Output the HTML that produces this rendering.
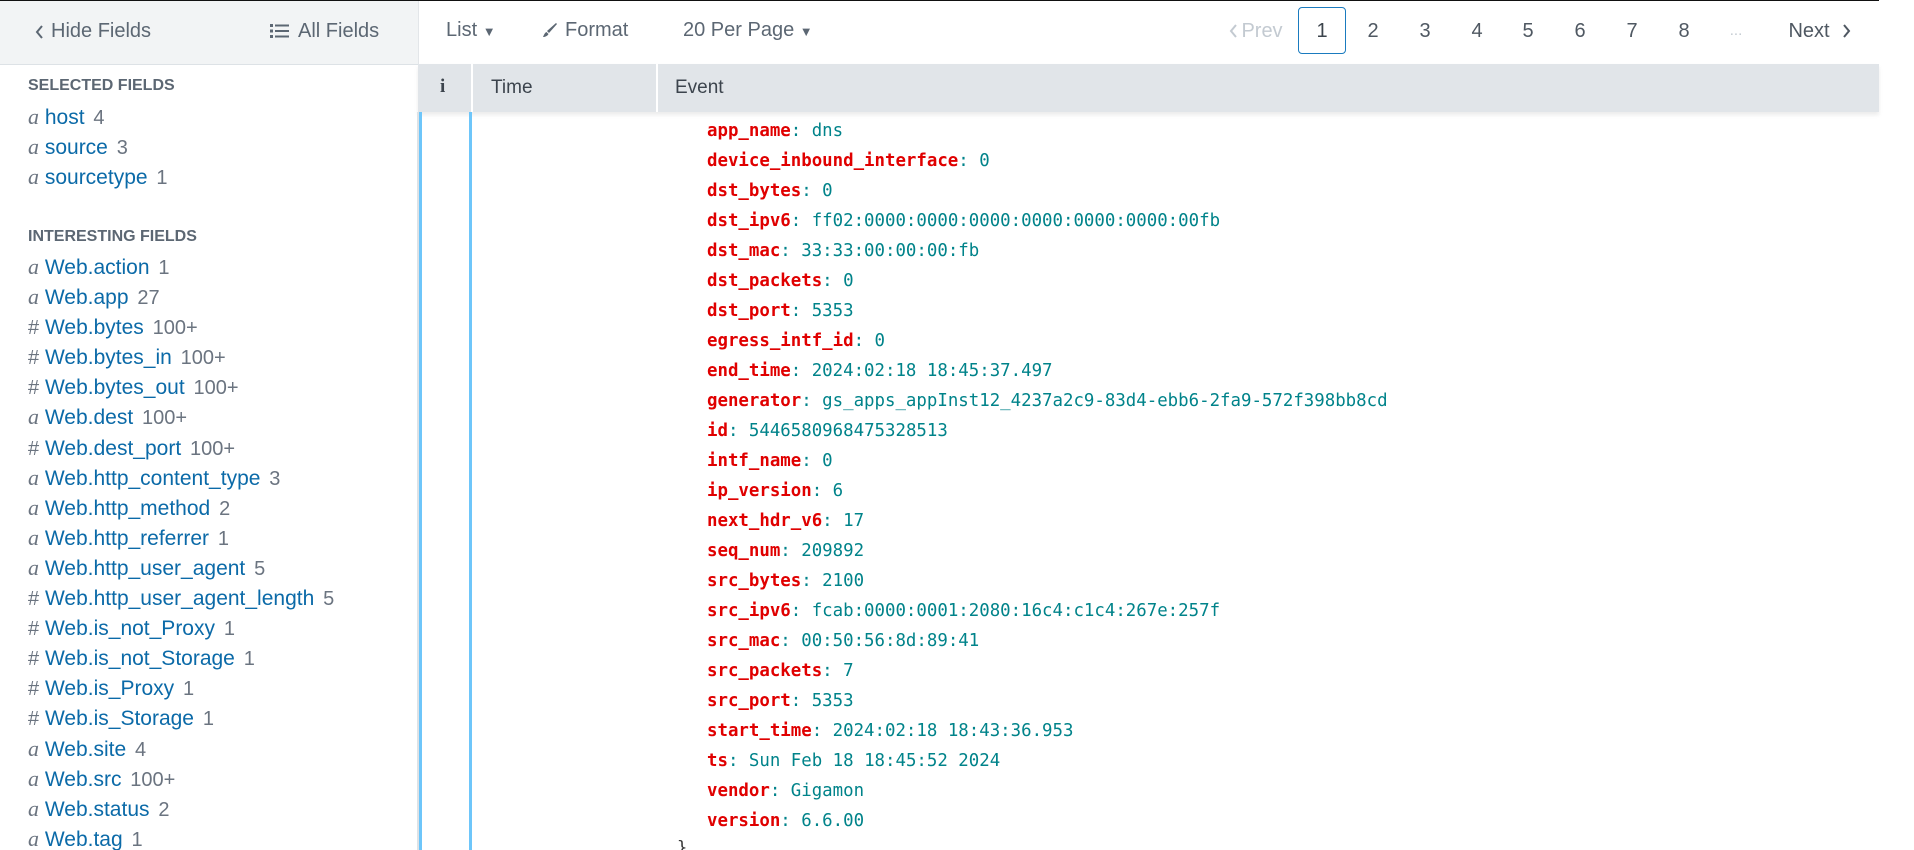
<!DOCTYPE html>
<html><head><meta charset="utf-8"><style>
*{margin:0;padding:0;box-sizing:border-box}
html,body{width:1914px;height:850px;overflow:hidden;background:#fff}
#w{position:relative;width:1914px;height:850px;overflow:hidden;font-family:"Liberation Sans",sans-serif}
.topline{position:absolute;left:0;top:0;width:1879px;height:1px;background:#111}
.ltb{position:absolute;left:0;top:1px;width:418px;height:64px;background:#f2f4f5;border-bottom:1px solid #dde2e6;color:#5c6773;font-size:20px}
.vb{position:absolute;width:3px;background:#6ec6fa}
.abs{position:absolute;white-space:nowrap}
.tb{color:#5c6773;font-size:20px}
.h{font-weight:bold;color:#5c6773;font-size:16px}
.f{font-size:21px;color:#0b6aa8}
.f div{height:30.1px;line-height:30.1px;overflow:visible;white-space:nowrap}
.f i{font-family:"Liberation Serif",serif;color:#6b7480;font-size:22px;font-style:italic;line-height:1}
.f b{font-weight:normal;color:#6b7480;font-size:20px;line-height:1;margin-left:3px}
.f .hs{color:#6b7480;font-size:20px;line-height:1}
.thead{position:absolute;left:418px;top:64px;width:1461px;height:48px;background:#e1e5e9;box-shadow:0 3px 4px rgba(0,0,0,.08);color:#3c444d;font-size:19px}
.sep{position:absolute;top:0;width:2px;height:48px;background:#fff}
.ev{position:absolute;left:707px;font-family:"DejaVu Sans Mono","Liberation Mono",monospace;font-size:17.4px;color:#00838a;white-space:nowrap}
.ev div{height:30px;line-height:30px}
.ev b{color:#e00000;line-height:1}
.pg{position:absolute;top:0;font-size:20px;color:#4f5862;line-height:62px;transform:translateX(-50%)}
</style></head><body><div id="w">
<div class="topline"></div>
<div class="ltb">
 <svg class="abs" style="left:35px;top:24px" width="9" height="14" viewBox="0 0 9 14"><path d="M7 1 L2 7 L7 13" fill="none" stroke="#5c6773" stroke-width="2"/></svg>
 <div class="abs" style="left:51px;top:19px">Hide Fields</div>
 <svg class="abs" style="left:270px;top:22px" width="20" height="16" viewBox="0 0 20 16"><g fill="#5c6773"><rect x="0" y="1" width="3" height="3"/><rect x="0" y="6.5" width="3" height="3"/><rect x="0" y="12" width="3" height="3"/><rect x="5" y="1.5" width="14" height="2"/><rect x="5" y="7" width="14" height="2"/><rect x="5" y="12.5" width="14" height="2"/></g></svg>
 <div class="abs" style="left:298px;top:19px">All Fields</div>
</div>
<div style="position:absolute;left:418px;top:1px;width:1px;height:64px;background:#e3e6e9"></div>
<div class="abs tb" style="left:446px;top:19px">List <span style="font-size:13px">&#9660;</span></div>
<svg class="abs" style="left:542px;top:22px" width="16" height="16" viewBox="0 0 16 16"><path d="M14 1 L15 2 L7 11 L5 9 Z" fill="#5c6773"/><path d="M4.5 10 L6.5 12 C5.5 14 3 15 1 15 C2 13 2.5 11 4.5 10Z" fill="#5c6773"/></svg>
<div class="abs tb" style="left:565px;top:19px">Format</div>
<div class="abs tb" style="left:683px;top:19px">20 Per Page <span style="font-size:13px">&#9660;</span></div>
<svg class="abs" style="left:1229px;top:24px" width="9" height="14" viewBox="0 0 9 14"><path d="M7 1 L2 7 L7 13" fill="none" stroke="#c3cad1" stroke-width="2"/></svg>
<div class="pg" style="left:1262px;color:#c3cad1">Prev</div>
<div style="position:absolute;left:1298px;top:7px;width:48px;height:47px;border:1px solid #1a7bbf;border-radius:4px"></div>
<div class="pg" style="left:1322px;color:#3c444d">1</div>
<div class="pg" style="left:1373px">2</div>
<div class="pg" style="left:1425px">3</div>
<div class="pg" style="left:1477px">4</div>
<div class="pg" style="left:1528px">5</div>
<div class="pg" style="left:1580px">6</div>
<div class="pg" style="left:1632px">7</div>
<div class="pg" style="left:1684px">8</div>
<div class="pg" style="left:1736px;color:#c3cad1;font-size:15px">...</div>
<div class="pg" style="left:1809px">Next</div>
<svg class="abs" style="left:1842px;top:24px" width="9" height="14" viewBox="0 0 9 14"><path d="M2 1 L7 7 L2 13" fill="none" stroke="#4f5862" stroke-width="2"/></svg>

<div class="thead">
 <div class="abs" style="left:22px;top:12px;font-family:'Liberation Serif',serif;font-weight:bold;font-size:19px">i</div>
 <div class="sep" style="left:53px"></div>
 <div class="abs" style="left:73px;top:13px">Time</div>
 <div class="sep" style="left:238px"></div>
 <div class="abs" style="left:257px;top:13px">Event</div>
</div>
<div style="position:absolute;left:417px;top:112px;width:2px;height:738px;background:#dde2e6"></div>
<div class="vb" style="left:419px;top:112px;height:738px"></div>
<div class="vb" style="left:469px;top:112px;height:738px"></div>

<div class="abs h" style="left:28px;top:77px">SELECTED FIELDS</div>
<div class="abs f" style="left:28px;top:103px">
<div><i>a</i> host <b>4</b></div>
<div><i>a</i> source <b>3</b></div>
<div><i>a</i> sourcetype <b>1</b></div>
</div>
<div class="abs h" style="left:28px;top:228px">INTERESTING FIELDS</div>
<div style="position:absolute;left:28px;top:253px" class="f">
<div><i>a</i> Web.action <b>1</b></div>
<div><i>a</i> Web.app <b>27</b></div>
<div><span class="hs">#</span> Web.bytes <b>100+</b></div>
<div><span class="hs">#</span> Web.bytes_in <b>100+</b></div>
<div><span class="hs">#</span> Web.bytes_out <b>100+</b></div>
<div><i>a</i> Web.dest <b>100+</b></div>
<div><span class="hs">#</span> Web.dest_port <b>100+</b></div>
<div><i>a</i> Web.http_content_type <b>3</b></div>
<div><i>a</i> Web.http_method <b>2</b></div>
<div><i>a</i> Web.http_referrer <b>1</b></div>
<div><i>a</i> Web.http_user_agent <b>5</b></div>
<div><span class="hs">#</span> Web.http_user_agent_length <b>5</b></div>
<div><span class="hs">#</span> Web.is_not_Proxy <b>1</b></div>
<div><span class="hs">#</span> Web.is_not_Storage <b>1</b></div>
<div><span class="hs">#</span> Web.is_Proxy <b>1</b></div>
<div><span class="hs">#</span> Web.is_Storage <b>1</b></div>
<div><i>a</i> Web.site <b>4</b></div>
<div><i>a</i> Web.src <b>100+</b></div>
<div><i>a</i> Web.status <b>2</b></div>
<div><i>a</i> Web.tag <b>1</b></div>
</div>

<div class="ev" style="top:116px">
<div><b>app_name</b>: dns</div>
<div><b>device_inbound_interface</b>: 0</div>
<div><b>dst_bytes</b>: 0</div>
<div><b>dst_ipv6</b>: ff02:0000:0000:0000:0000:0000:0000:00fb</div>
<div><b>dst_mac</b>: 33:33:00:00:00:fb</div>
<div><b>dst_packets</b>: 0</div>
<div><b>dst_port</b>: 5353</div>
<div><b>egress_intf_id</b>: 0</div>
<div><b>end_time</b>: 2024:02:18 18:45:37.497</div>
<div><b>generator</b>: gs_apps_appInst12_4237a2c9-83d4-ebb6-2fa9-572f398bb8cd</div>
<div><b>id</b>: 5446580968475328513</div>
<div><b>intf_name</b>: 0</div>
<div><b>ip_version</b>: 6</div>
<div><b>next_hdr_v6</b>: 17</div>
<div><b>seq_num</b>: 209892</div>
<div><b>src_bytes</b>: 2100</div>
<div><b>src_ipv6</b>: fcab:0000:0001:2080:16c4:c1c4:267e:257f</div>
<div><b>src_mac</b>: 00:50:56:8d:89:41</div>
<div><b>src_packets</b>: 7</div>
<div><b>src_port</b>: 5353</div>
<div><b>start_time</b>: 2024:02:18 18:43:36.953</div>
<div><b>ts</b>: Sun Feb 18 18:45:52 2024</div>
<div><b>vendor</b>: Gigamon</div>
<div><b>version</b>: 6.6.00</div>
</div>
<div class="abs" style="left:677px;top:838px;font-family:'DejaVu Sans Mono',monospace;font-size:17px;color:#333">}</div>
</div></body></html>
